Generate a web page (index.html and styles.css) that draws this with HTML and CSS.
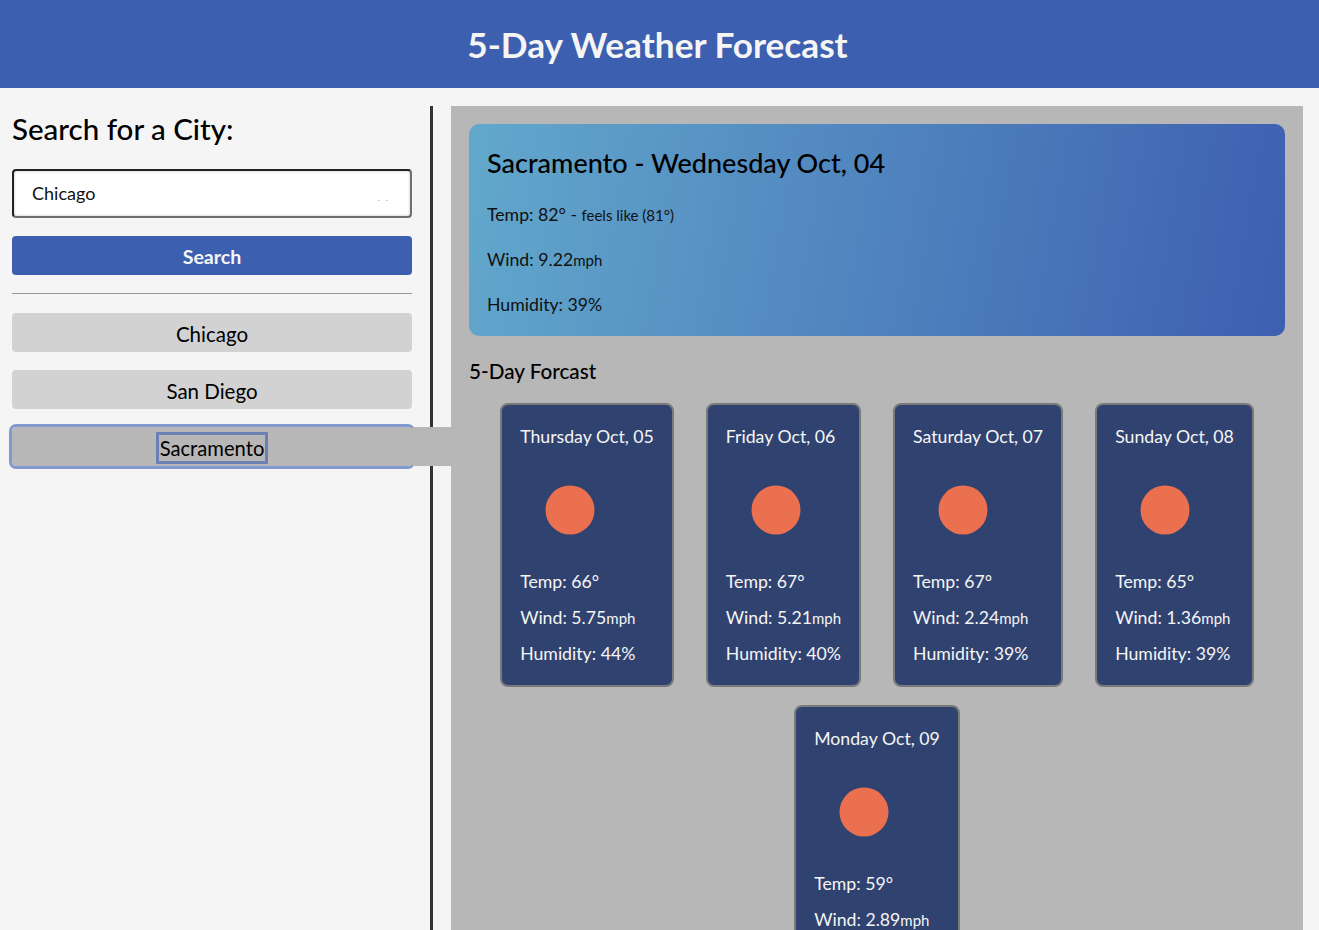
FILE: index.html
```html
<!DOCTYPE html>
<html lang="en">
<head>
    <meta charset="UTF-8">
    <meta name="viewport" content="width=device-width, initial-scale=1.0">
    <title>5-Day Weather Forecast</title>
    <link rel="stylesheet" href="styles.css">
</head>
<body>

<header class="page-header">
    <h1>5-Day Weather Forecast</h1>
</header>

<div class="layout">
    <aside class="sidebar">
        <h2>Search for a City:</h2>
        <div class="search-box">
            <input class="search-input" type="text" value="Chicago">
            <span class="input-dots"></span>
        </div>
        <button class="btn btn-search">Search</button>
        <hr>
        <button class="btn btn-city">Chicago</button>
        <button class="btn btn-city">San Diego</button>
        <button class="btn btn-city is-active"><span>Sacramento</span></button>
    </aside>

    <main class="results">
        <section class="today">
            <h2>Sacramento - Wednesday Oct, 04</h2>
            <p>Temp: 82° - <small>feels like (81°)</small></p>
            <p>Wind: 9.22<small>mph</small></p>
            <p>Humidity: 39%</p>
        </section>

        <h3>5-Day Forcast</h3>

        <div class="cards">
            <article class="card">
                <h4>Thursday Oct, 05</h4>
                <svg class="sun" viewBox="0 0 100 100"><circle cx="50" cy="50" r="24.5"/></svg>
                <p>Temp: 66°</p>
                <p>Wind: 5.75<small>mph</small></p>
                <p>Humidity: 44%</p>
            </article>
            <article class="card">
                <h4>Friday Oct, 06</h4>
                <svg class="sun" viewBox="0 0 100 100"><circle cx="50" cy="50" r="24.5"/></svg>
                <p>Temp: 67°</p>
                <p>Wind: 5.21<small>mph</small></p>
                <p>Humidity: 40%</p>
            </article>
            <article class="card">
                <h4>Saturday Oct, 07</h4>
                <svg class="sun" viewBox="0 0 100 100"><circle cx="50" cy="50" r="24.5"/></svg>
                <p>Temp: 67°</p>
                <p>Wind: 2.24<small>mph</small></p>
                <p>Humidity: 39%</p>
            </article>
            <article class="card">
                <h4>Sunday Oct, 08</h4>
                <svg class="sun" viewBox="0 0 100 100"><circle cx="50" cy="50" r="24.5"/></svg>
                <p>Temp: 65°</p>
                <p>Wind: 1.36<small>mph</small></p>
                <p>Humidity: 39%</p>
            </article>
            <article class="card">
                <h4>Monday Oct, 09</h4>
                <svg class="sun" viewBox="0 0 100 100"><circle cx="50" cy="50" r="24.5"/></svg>
                <p>Temp: 59°</p>
                <p>Wind: 2.89<small>mph</small></p>
            </article>
        </div>
    </main>
</div>

</body>
</html>
```

FILE: styles.css
```css
html, body {
    height: 100%;
    overflow: hidden;
}

body {
    margin: 0;
    background-color: #f5f5f5;
    font-family: 'Lato', 'Open Sans', sans-serif;
    color: #000;
}

.page-header {
    background-color: #3d5fb0;
    height: 88px;
    padding-right: 4px;
    display: flex;
    align-items: center;
    justify-content: center;
}

.page-header h1 {
    margin: 0;
    color: #f5f5f5;
    font-size: 35.2px;
    font-weight: 700;
}

.layout {
    display: flex;
    margin-top: 18px;
    padding-right: 16px;
}

.sidebar {
    width: 400px;
    min-height: 830px;
    flex-shrink: 0;
    padding: 0 18px 0 12px;
    border-right: 3px solid #333;
    display: flex;
    flex-direction: column;
}

.sidebar h2 {
    margin: 3px 0 20px;
    font-size: 29.5px;
    line-height: 40px;
    font-weight: 500;
}

.search-box {
    position: relative;
    margin-bottom: 18px;
}

.search-input {
    box-sizing: border-box;
    display: block;
    width: 100%;
    height: 49px;
    padding: 0 18px 2px;
    border: 2px solid;
    border-color: #222 #6f6f6f #6f6f6f #222;
    border-radius: 4px;
    background-color: #fff;
    box-shadow: inset 0 0 3px rgba(0, 0, 0, 0.25);
    font-family: inherit;
    font-size: 18px;
    color: #111;
    outline: none;
}

.input-dots {
    position: absolute;
    left: 366px;
    top: 31px;
    width: 2px;
    height: 1px;
    background-color: #c4cdd8;
    box-shadow: 8px 0 0 #c4cdd8;
}

.btn {
    position: relative;
    height: 39px;
    border: none;
    border-radius: 4px;
    font-family: inherit;
    font-size: 20.5px;
    padding: 2px 0 0;
    cursor: pointer;
}

.btn-search {
    background-color: #3d5fb0;
    color: #f5f5f5;
    font-size: 19.6px;
    font-weight: 700;
}

hr {
    width: 100%;
    margin: 18px 0 19px;
    border: none;
    border-top: 1px solid #999;
}

.btn-city {
    background-color: #d2d2d2;
    color: #000;
    margin-bottom: 18px;
}

.btn-city.is-active {
    background-color: #b7b7b7;
    outline: 3px solid #8299cf;
    font-size: 20.2px;
    padding-top: 3px;
    z-index: 1;
}

.btn-city.is-active span {
    display: inline-block;
    line-height: 26px;
    outline: 3px solid #6b80b5;
    padding: 0 1px;
}

/* connects the selected city to the results panel */
.btn-city.is-active::after {
    content: '';
    position: absolute;
    left: 100%;
    top: 0;
    width: 39px;
    height: 39px;
    background-color: #b7b7b7;
}

.results {
    flex: 1;
    margin-left: 18px;
    padding: 18px;
    background-color: #b7b7b7;
    min-width: 0;
}

.today {
    padding: 18px;
    height: 176px;
    border-radius: 10px;
    background: linear-gradient(100deg, #62a8cc, #3d5fb0);
}

.today h2 {
    margin: 4px 0 21px;
    font-size: 27px;
    line-height: 34px;
    font-weight: 500;
}

.today p {
    margin: 0 0 18px;
    font-size: 17.7px;
    line-height: 27px;
    color: #111;
}

small {
    font-size: 15px;
    line-height: 1;
}

h3 {
    margin: 20px 0 17px;
    font-size: 20.7px;
    line-height: 30px;
    font-weight: 500;
}

.cards {
    display: flex;
    flex-wrap: wrap;
    justify-content: center;
    gap: 18px 32px;
}

.card {
    box-sizing: border-box;
    height: 284px;
    padding: 18px;
    border: 2px solid #7a7a7a;
    border-radius: 8px;
    background-color: #304270;
    color: #f5f5f5;
}

.card h4 {
    margin: 0;
    font-size: 17.7px;
    line-height: 27px;
    font-weight: 400;
}

.sun {
    display: block;
    width: 100px;
    height: 100px;
    margin: 10px 0 8px;
    fill: #eb7050;
}

.card p {
    margin: 0 0 9px;
    font-size: 17.7px;
    line-height: 27px;
}
```
